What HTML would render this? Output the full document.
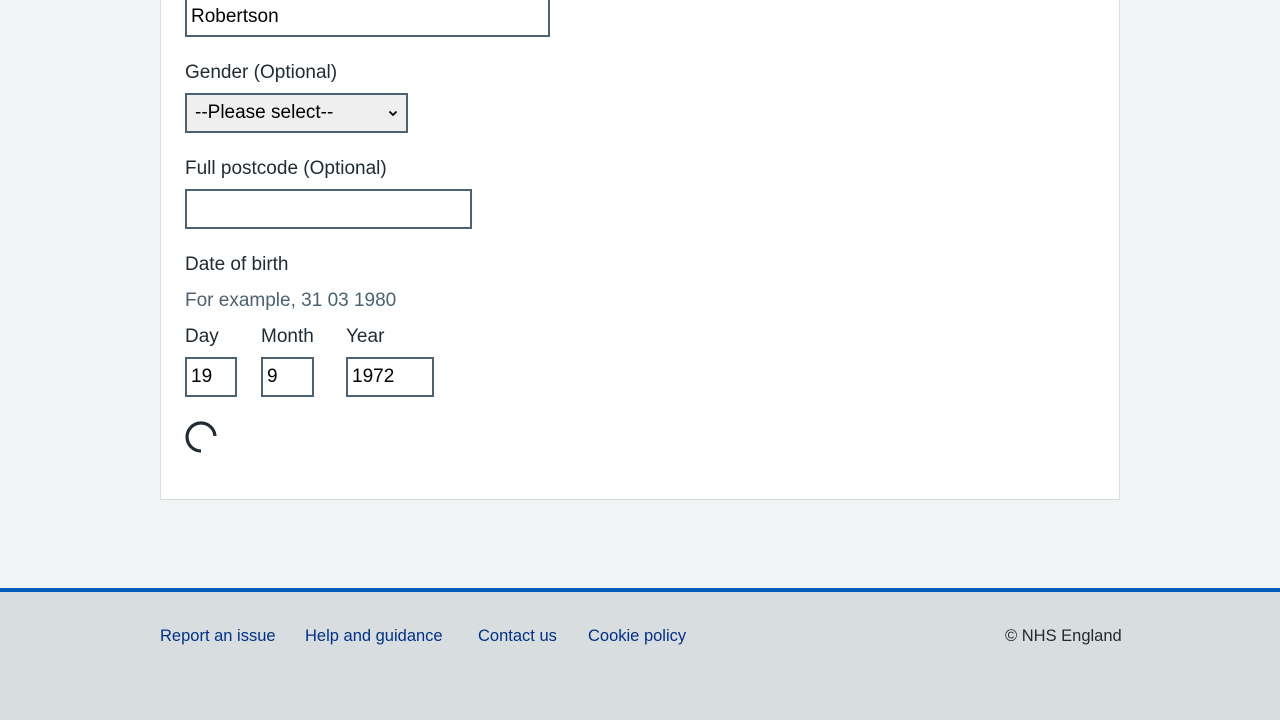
<!DOCTYPE html>
<html><head><style>
body{margin:0;width:1280px;height:720px;background:#f0f4f5;font-family:"Liberation Sans",sans-serif;position:relative;overflow:hidden;color:#212b32}
.card{position:absolute;left:160px;top:-10px;width:958px;height:508px;background:#fff;border:1px solid #d8dde0}
.a{position:absolute;white-space:nowrap}
.lab{font-size:19px;color:#212b32}
.box{position:absolute;border:2px solid #4c6272;background:#fff;box-sizing:border-box;font-size:19px;color:#000;padding-left:4px;line-height:36px}
.foot{position:absolute;left:0;top:588px;width:1280px;height:132px;background:#d8dde0;border-top:4px solid #005eb8;box-sizing:border-box}
.fl{position:absolute;top:35px;font-size:16.5px;color:#003087;white-space:nowrap}
</style></head><body>
<div class="card"></div>
<div class="box" style="left:185px;top:-4px;width:365px;height:41px;line-height:38px">Robertson</div>
<div class="a lab" style="left:185px;top:62px">Gender (Optional)</div>
<div class="box" style="left:185px;top:93px;width:223px;height:40px;background:#efefef;padding-left:8px;line-height:35px">--Please select--<svg style="position:absolute;right:8px;top:15px" width="10" height="7" viewBox="0 0 10 7"><path d="M1.5 1.5 L5 5 L8.5 1.5" fill="none" stroke="#000" stroke-width="1.8"/></svg></div>
<div class="a lab" style="left:185px;top:158px">Full postcode (Optional)</div>
<div class="box" style="left:185px;top:189px;width:287px;height:40px"></div>
<div class="a lab" style="left:185px;top:254px">Date of birth</div>
<div class="a lab" style="left:185px;top:290px;color:#4c6272">For example, 31 03 1980</div>
<div class="a lab" style="left:185px;top:326px">Day</div>
<div class="a lab" style="left:261px;top:326px">Month</div>
<div class="a lab" style="left:346px;top:326px">Year</div>
<div class="box" style="left:185px;top:357px;width:52px;height:40px">19</div>
<div class="box" style="left:261px;top:357px;width:53px;height:40px">9</div>
<div class="box" style="left:346px;top:357px;width:88px;height:40px">1972</div>
<svg class="a" style="left:184px;top:420px" width="34" height="34" viewBox="0 0 34 34"><path d="M31 16 A14 14 0 1 0 17 31" fill="none" stroke="#212b32" stroke-width="3.2"/></svg>
<div class="foot">
<span class="fl" style="left:160px">Report an issue</span>
<span class="fl" style="left:305px">Help and guidance</span>
<span class="fl" style="left:478px">Contact us</span>
<span class="fl" style="left:588px">Cookie policy</span>
<span class="fl" style="left:1005px;color:#212b32">© NHS England</span>
</div>
</body></html>
